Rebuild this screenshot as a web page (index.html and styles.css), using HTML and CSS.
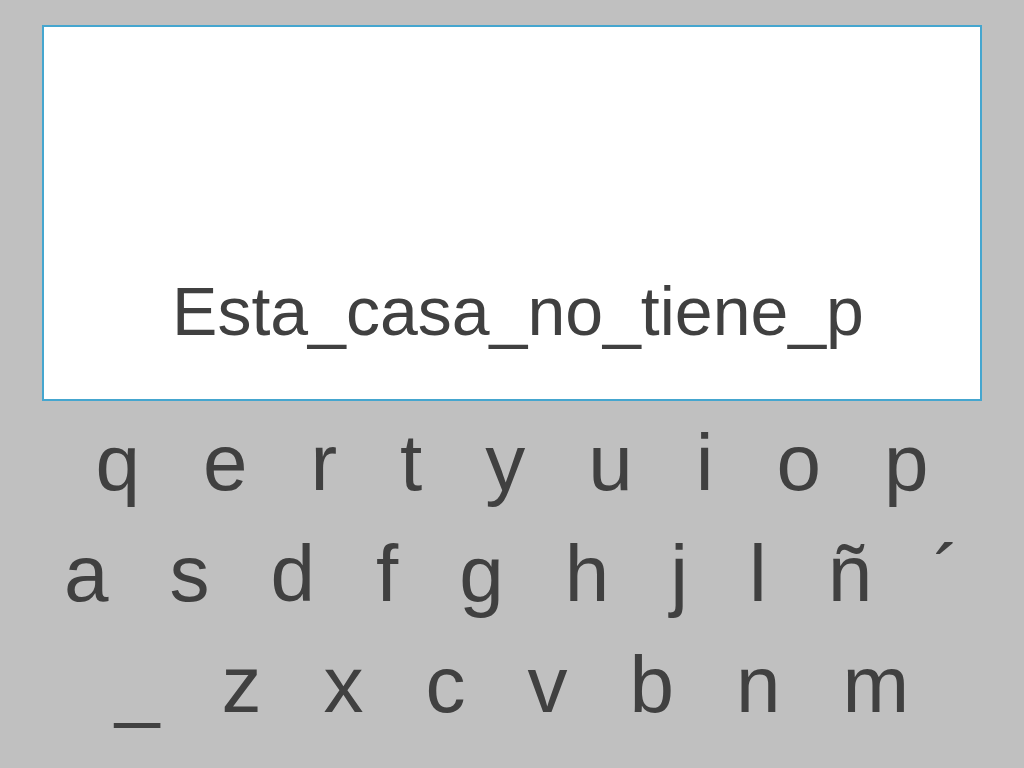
FILE: index.html
```html
<html>
    <head>
        <title>Teclado</title>
        <link rel="stylesheet" href="styles.css">
    </head>
    <body>
        <div id="pantalla">
            <span id="frase">Esta_casa_no_tiene_p</span>
        </div>
        <div id="teclado">
            <div class="fila fila-1">
                <span>q</span><span>e</span><span>r</span><span>t</span><span>y</span><span>u</span><span>i</span><span>o</span><span>p</span>
            </div>
            <div class="fila fila-2">
                <span>a</span><span>s</span><span>d</span><span>f</span><span>g</span><span>h</span><span>j</span><span>l</span><span>ñ</span><span>´</span>
            </div>
            <div class="fila fila-3">
                <span>_</span><span>z</span><span>x</span><span>c</span><span>v</span><span>b</span><span>n</span><span>m</span>
            </div>
        </div>
    </body>
</html>
```
FILE: styles.css
```css
body{
    margin: 0;
    background-color: #c0c0c0;
    font-family: "Liberation Sans", Arial, sans-serif;
    color: #404040;
}
#pantalla{
    margin: 25px 0 0 42px;
    width: 936px;
    height: 372px;
    background-color: white;
    border: 2px solid #45a6cf;
    display: flex;
    flex-direction: column;
    justify-content: flex-end;
    align-items: center;
}
#frase{
    font-size: 68px;
    line-height: 80px;
    padding: 0 0 48px 12px;
}
#teclado{
    margin-top: 6px;
}
.fila{
    display: flex;
    justify-content: center;
    gap: 61px;
    font-size: 80px;
    line-height: 111px;
}
.fila-1{
    gap: 63px;
}
.fila-3{
    gap: 62px;
}
```
